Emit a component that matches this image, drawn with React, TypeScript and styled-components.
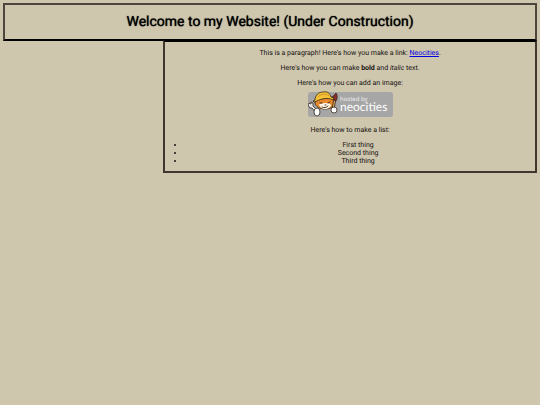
import React from "react";
import styled, { createGlobalStyle } from "styled-components";

const GlobalStyle = createGlobalStyle`
  body {
    margin: 0;
    background: #cfc6ae;
    color: #14120e;
    font: 7px/8px Roboto, "Liberation Sans", sans-serif;
    text-rendering: geometricPrecision;
  }
`;

const Page = styled.div`
  padding: 3px;
`;

const Header = styled.header`
  border: 2px solid #4d473b;
  border-bottom-color: #000;
  padding: 8px;
  text-align: center;
`;

const Title = styled.h1`
  margin: 0;
  color: #000;
  font-size: 14px;
  line-height: 18px;
  font-weight: 400;
  text-shadow: 0 0 1px #000;
`;

const Content = styled.main`
  box-sizing: border-box;
  width: 70%;
  margin-top: -1px;
  margin-left: auto;
  border: 2px solid #40372d;
  border-top-color: #000;
  padding: 7px 7px 6px;
  text-align: center;
`;

const Paragraph = styled.p`
  margin: 0 0 7px;
`;

const Link = styled.a`
  color: #0000e0;
`;

const BadgeFrame = styled.div`
  width: 85px;
  margin: -3px auto 8px;
`;

const Badge = styled.svg`
  display: block;
  width: 100%;
`;

const List = styled.ul`
  margin: 0;
  padding-left: 13px;
`;

const Item = styled.li`
  padding-left: 3px;
`;

function NeocitiesBadge() {
  return (
    <Badge viewBox="0 0 85 27" role="img" aria-label="Hosted by Neocities">
      <rect x="0" y="1" width="85" height="25" rx="3" fill="#a6a6a6" />
      <text x="32" y="10" fontFamily="Open Sans, sans-serif" fontSize="6" fill="#f2f2f2">hosted by</text>
      <text x="32" y="20" fontFamily="Lato, sans-serif" fontSize="12" fill="#fff">neocities</text>
      <g stroke="#35271b" strokeWidth="0.8" strokeLinejoin="round">
        <path d="M8 8 7 12c1 4 5 6 10 6 5 0 9-2 9-6l1-8-5 3-10 1Z" fill="#e8892b" />
        <path d="M11 14c1-2 3-1 5-2 3 0 6 0 7 2 0 2-3 4-6 4s-5-2-6-4Z" fill="#fff5e4" stroke="none" />
        <path d="M7 9C7 4 11 1 15 1c4-1 7 1 8 5l3 1-1 2C19 6 13 8 9 10l-3 1-1-1Z" fill="#f5c136" />
        <path d="M10 6c3-3 8-4 11-1" fill="none" stroke="#c88a20" />
        <path d="m24 17 2-9 2 0-2 10Z" fill="#d8a262" />
        <path d="M26 9c-1-3 0-5 2-7 2 3 1 6 0 8Z" fill="#8f2c2c" />
        <path d="m9 19-4-4 0-3-2-1 0 2-2-1-1 2 2 3 2 0 4 5Z" fill="#e8e8e8" />
        <ellipse cx="9" cy="21" rx="3" ry="4" fill="#fff" />
        <ellipse cx="26" cy="19" rx="3" ry="3" fill="#fff" />
      </g>
      <path d="m12 12 2 0m6 0 2-1m-5 3 1 0m-4 2c2 1 4 1 6-1" fill="none" stroke="#35271b" strokeWidth="0.9" strokeLinecap="round" />
    </Badge>
  );
}

export default function App() {
  return (
    <>
      <GlobalStyle />
      <Page>
        <Header>
          <Title>Welcome to my Website! (Under Construction)</Title>
        </Header>
        <Content>
          <Paragraph>
            This is a paragraph! Here's how you make a link: <Link href="https://neocities.org">Neocities</Link>.
          </Paragraph>
          <Paragraph>
            Here's how you can make <strong>bold</strong> and <em>italic</em> text.
          </Paragraph>
          <Paragraph>Here's how you can add an image:</Paragraph>
          <BadgeFrame><NeocitiesBadge /></BadgeFrame>
          <Paragraph>Here's how to make a list:</Paragraph>
          <List>
            <Item>First thing</Item>
            <Item>Second thing</Item>
            <Item>Third thing</Item>
          </List>
        </Content>
      </Page>
    </>
  );
}
